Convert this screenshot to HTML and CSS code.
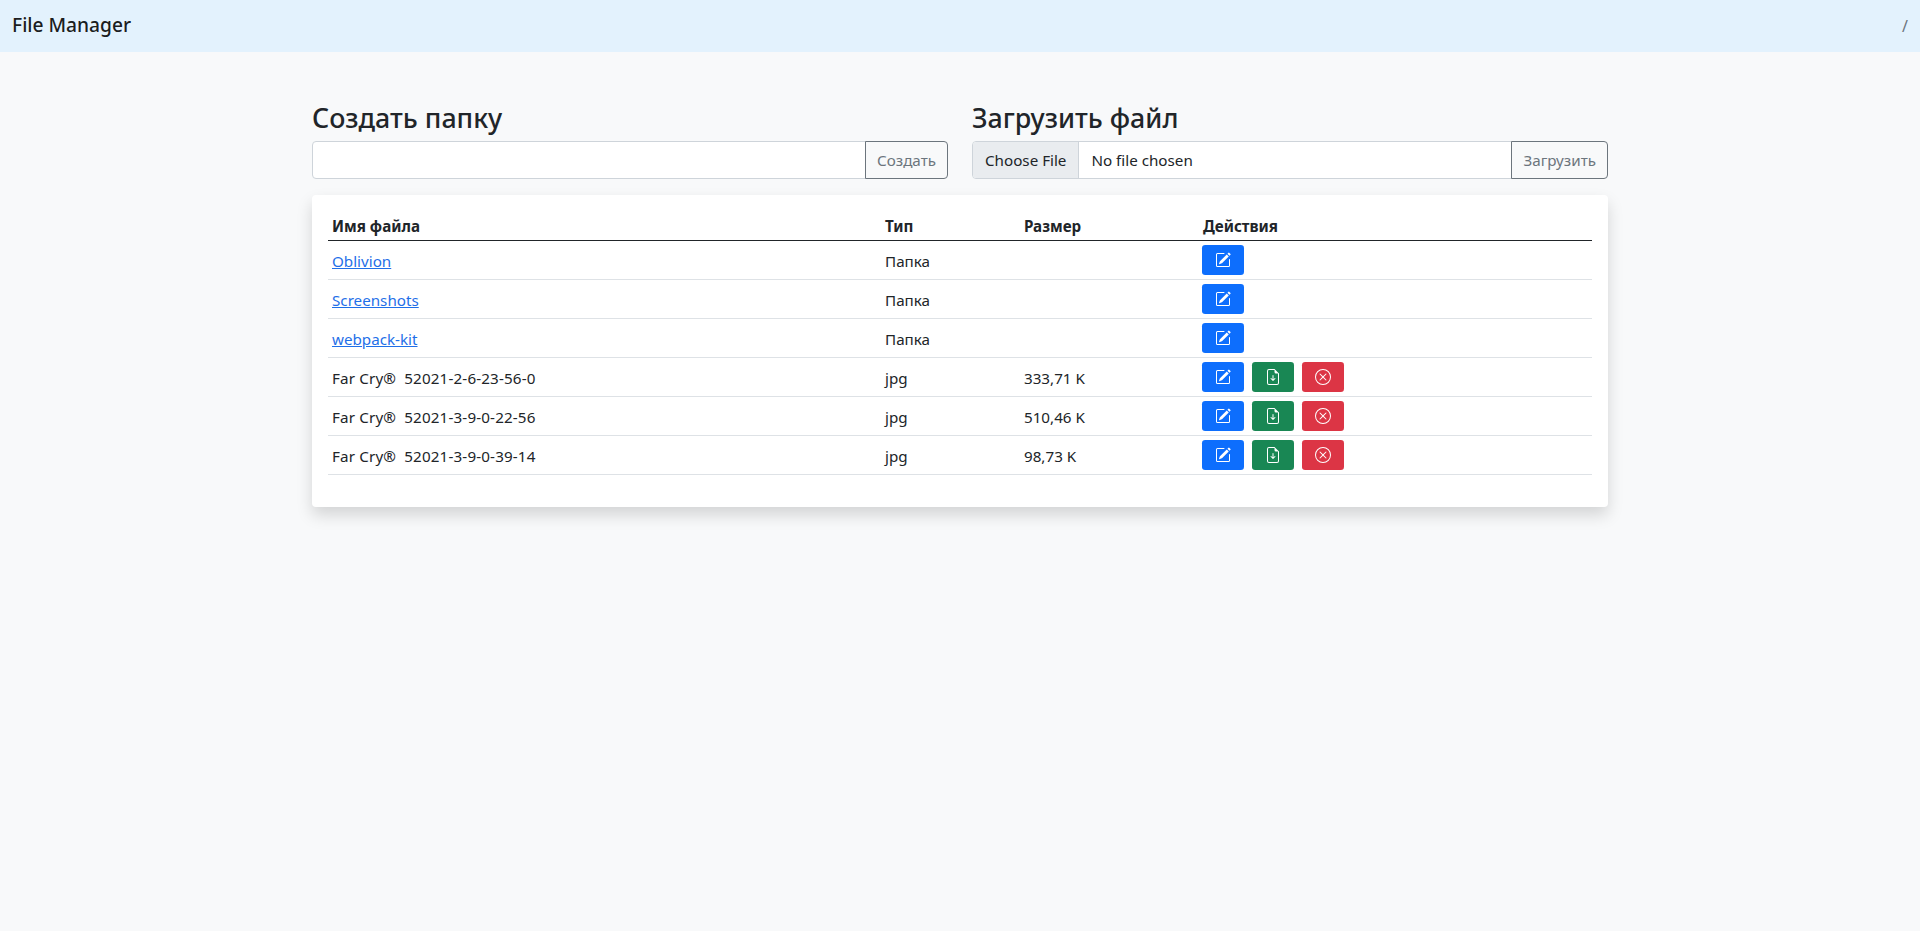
FILE: index.html
```html
<!DOCTYPE html>
<html lang="ru">
<head>
  <meta charset="UTF-8" />
  <meta name="viewport" content="width=device-width, initial-scale=1.0" />
  <title>File Manager</title>
  <link rel="stylesheet" href="styles.css">
</head>
<body>

  <svg class="sprite" xmlns="http://www.w3.org/2000/svg">
    <symbol id="icon-edit" viewBox="0 0 16 16">
      <path d="M15.502 1.94a.5.5 0 0 1 0 .706L14.459 3.69l-2-2L13.502.646a.5.5 0 0 1 .707 0l1.293 1.293zm-1.75 2.456-2-2L4.939 9.21a.5.5 0 0 0-.121.196l-.805 2.414a.25.25 0 0 0 .316.316l2.414-.805a.5.5 0 0 0 .196-.12l6.813-6.814z"/>
      <path fill-rule="evenodd" d="M1 13.5A1.5 1.5 0 0 0 2.5 15h11a1.5 1.5 0 0 0 1.5-1.5v-6a.5.5 0 0 0-1 0v6a.5.5 0 0 1-.5.5h-11a.5.5 0 0 1-.5-.5v-11a.5.5 0 0 1 .5-.5H9a.5.5 0 0 0 0-1H2.5A1.5 1.5 0 0 0 1 2.5v11z"/>
    </symbol>
    <symbol id="icon-download" viewBox="0 0 16 16">
      <path d="M8.5 6.5a.5.5 0 0 0-1 0v3.793L6.354 9.146a.5.5 0 1 0-.708.708l2 2a.5.5 0 0 0 .708 0l2-2a.5.5 0 0 0-.708-.708L8.5 10.293V6.5z"/>
      <path d="M14 14V4.5L9.5 0H4a2 2 0 0 0-2 2v12a2 2 0 0 0 2 2h8a2 2 0 0 0 2-2zM9.5 3A1.5 1.5 0 0 0 11 4.5h2V14a1 1 0 0 1-1 1H4a1 1 0 0 1-1-1V2a1 1 0 0 1 1-1h5.5v2z"/>
    </symbol>
    <symbol id="icon-delete" viewBox="0 0 16 16">
      <path d="M8 15A7 7 0 1 1 8 1a7 7 0 0 1 0 14zm0 1A8 8 0 1 0 8 0a8 8 0 0 0 0 16z"/>
      <path d="M4.646 4.646a.5.5 0 0 1 .708 0L8 7.293l2.646-2.647a.5.5 0 0 1 .708.708L8.707 8l2.647 2.646a.5.5 0 0 1-.708.708L8 8.707l-2.646 2.647a.5.5 0 0 1-.708-.708L7.293 8 4.646 5.354a.5.5 0 0 1 0-.708z"/>
    </symbol>
  </svg>

  <header class="navbar">
    <a class="brand" href="#">File Manager</a>
    <span class="path">/</span>
  </header>

  <main class="container">
    <div class="forms">
      <form class="form-col">
        <h3>Создать папку</h3>
        <div class="input-group">
          <input type="text" class="form-control" />
          <button type="button" class="btn-outline">Создать</button>
        </div>
      </form>
      <form class="form-col">
        <h3>Загрузить файл</h3>
        <div class="input-group">
          <input type="file" class="form-control" />
          <button type="button" class="btn-outline">Загрузить</button>
        </div>
      </form>
    </div>

    <div class="card">
      <table class="files">
        <thead>
          <tr>
            <th class="col-name">Имя файла</th>
            <th class="col-type">Тип</th>
            <th class="col-size">Размер</th>
            <th>Действия</th>
          </tr>
        </thead>
        <tbody>
          <tr>
            <td><a href="#">Oblivion</a></td>
            <td>Папка</td>
            <td></td>
            <td class="actions">
              <div class="actions-row">
                <button class="btn btn-blue"><svg class="icon"><use href="#icon-edit"/></svg></button>
              </div>
            </td>
          </tr>
          <tr>
            <td><a href="#">Screenshots</a></td>
            <td>Папка</td>
            <td></td>
            <td class="actions">
              <div class="actions-row">
                <button class="btn btn-blue"><svg class="icon"><use href="#icon-edit"/></svg></button>
              </div>
            </td>
          </tr>
          <tr>
            <td><a href="#">webpack-kit</a></td>
            <td>Папка</td>
            <td></td>
            <td class="actions">
              <div class="actions-row">
                <button class="btn btn-blue"><svg class="icon"><use href="#icon-edit"/></svg></button>
              </div>
            </td>
          </tr>
          <tr>
            <td class="file-name">Far Cry®&nbsp; 52021-2-6-23-56-0</td>
            <td>jpg</td>
            <td>333,71 K</td>
            <td class="actions">
              <div class="actions-row">
                <button class="btn btn-blue"><svg class="icon"><use href="#icon-edit"/></svg></button>
                <button class="btn btn-green"><svg class="icon"><use href="#icon-download"/></svg></button>
                <button class="btn btn-red"><svg class="icon"><use href="#icon-delete"/></svg></button>
              </div>
            </td>
          </tr>
          <tr>
            <td class="file-name">Far Cry®&nbsp; 52021-3-9-0-22-56</td>
            <td>jpg</td>
            <td>510,46 K</td>
            <td class="actions">
              <div class="actions-row">
                <button class="btn btn-blue"><svg class="icon"><use href="#icon-edit"/></svg></button>
                <button class="btn btn-green"><svg class="icon"><use href="#icon-download"/></svg></button>
                <button class="btn btn-red"><svg class="icon"><use href="#icon-delete"/></svg></button>
              </div>
            </td>
          </tr>
          <tr>
            <td class="file-name">Far Cry®&nbsp; 52021-3-9-0-39-14</td>
            <td>jpg</td>
            <td>98,73 K</td>
            <td class="actions">
              <div class="actions-row">
                <button class="btn btn-blue"><svg class="icon"><use href="#icon-edit"/></svg></button>
                <button class="btn btn-green"><svg class="icon"><use href="#icon-download"/></svg></button>
                <button class="btn btn-red"><svg class="icon"><use href="#icon-delete"/></svg></button>
              </div>
            </td>
          </tr>
        </tbody>
      </table>
    </div>
  </main>

</body>
</html>
```

FILE: styles.css
```css
* {
  box-sizing: border-box;
}

body {
  font-family: "Noto Sans", "Open Sans", sans-serif;
  font-size: 15.2px;
  line-height: 1.5;
  color: #212529;
  background: #f8f9fa;
  margin: 0;
}

.sprite {
  display: none;
}

.navbar {
  background-color: #e3f2fd;
  height: 52px;
  padding: 0 12px;
  display: flex;
  justify-content: space-between;
  align-items: center;
}

.brand {
  font-size: 19.2px;
  font-weight: 500;
  color: rgba(0,0,0,0.9);
  text-decoration: none;
  padding-bottom: 2px;
}

.path {
  font-size: 16px;
  color: #6c757d;
}

.container {
  width: 1296px;
  margin: 48px auto 0;
  padding-bottom: 48px;
}

.forms {
  display: grid;
  grid-template-columns: 1fr 1fr;
  column-gap: 24px;
}

h3 {
  font-size: 26.8px;
  font-weight: 500;
  line-height: 33px;
  margin: 0 0 7px;
  padding-top: 1px;
}

.input-group {
  display: flex;
}

.form-control {
  flex: 1;
  min-width: 0;
  height: 38px;
  padding: 6px 12px;
  font: inherit;
  color: #212529;
  background: #fff;
  border: 1px solid #ced4da;
  border-radius: 4px 0 0 4px;
}

.form-control::file-selector-button {
  height: 36px;
  padding: 6px 12px;
  margin: -6px 12px -6px -12px;
  font: inherit;
  color: #212529;
  background: #e9ecef;
  border: none;
  border-right: 1px solid #ced4da;
  border-radius: 0;
}

.btn-outline {
  margin-left: -1px;
  height: 38px;
  padding: 6px 11px;
  font: inherit;
  color: #6c757d;
  background: transparent;
  border: 1px solid #6c757d;
  border-radius: 0 4px 4px 0;
}

.card {
  margin-top: 16px;
  padding: 16px;
  background: #fff;
  border-radius: 4px;
  box-shadow: 0 8px 16px rgba(0,0,0,0.15);
}

.files {
  width: 100%;
  margin-bottom: 16px;
  border-collapse: collapse;
  line-height: 21px;
}

.files th {
  text-align: left;
  font-weight: 700;
  padding: 5px 4px 3px;
  border-bottom: 1px solid #212529;
}

.files td {
  padding: 5px 4px 3px;
  border-bottom: 1px solid #dee2e6;
  vertical-align: middle;
}

.col-name {
  width: 553px;
}

.col-type {
  width: 139px;
}

.col-size {
  width: 179px;
}

.files a {
  color: #1f6fe8;
}

.files .file-name {
  letter-spacing: 0.15px;
}

.files .actions {
  padding: 4px 4px 4px 3px;
}

.actions-row {
  display: flex;
  gap: 8px;
}

.btn {
  width: 42px;
  height: 30px;
  padding: 0;
  display: flex;
  justify-content: center;
  align-items: center;
  color: #fff;
  border: none;
  border-radius: 3.2px;
}

.btn-blue {
  background: #0d6efd;
}

.btn-green {
  background: #198754;
}

.btn-red {
  background: #dc3545;
}

.icon {
  width: 16px;
  height: 16px;
  fill: currentColor;
}
```
